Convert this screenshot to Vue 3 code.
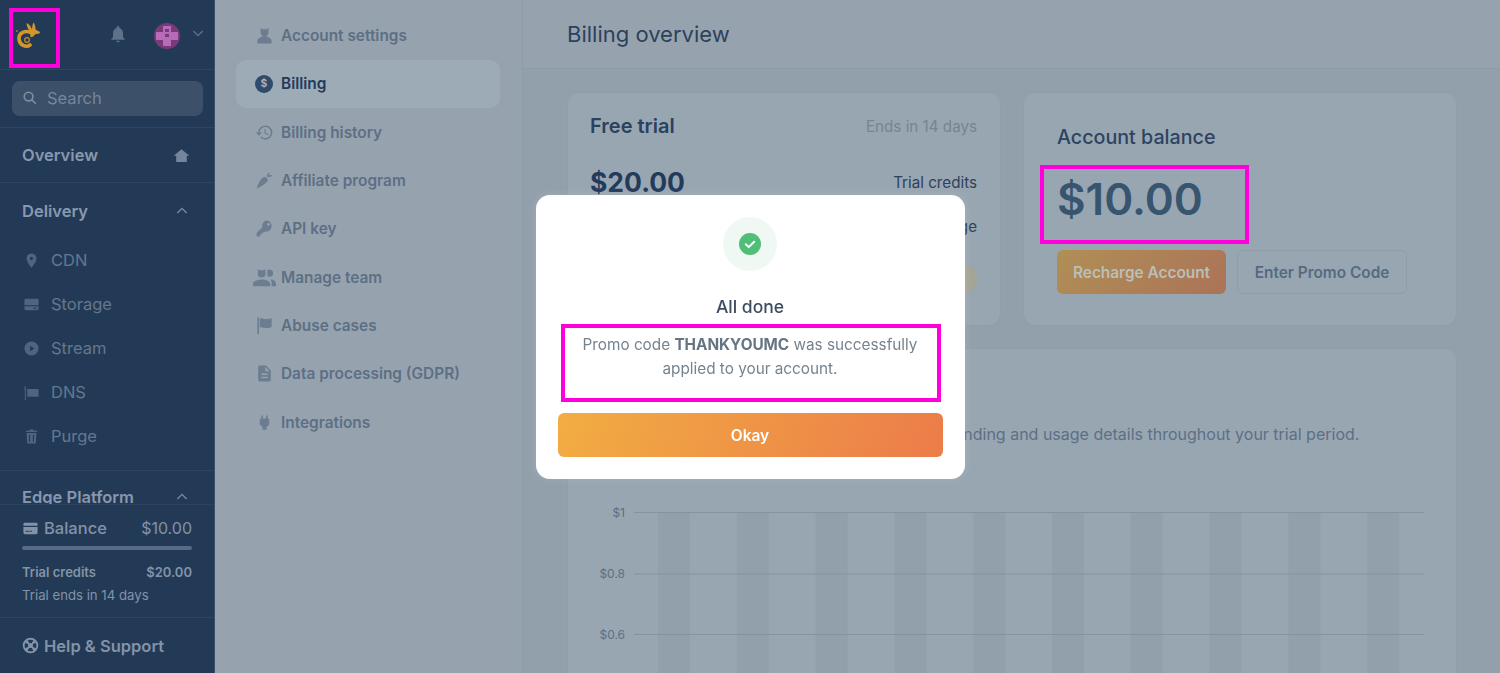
<template>
  <div class="app">
    <aside class="sidebar">
      <div class="side-top">
        <svg class="logo" viewBox="0 0 26 28">
          <path fill="none" stroke="#d2962d" stroke-width="3.600" stroke-linecap="round" d="M18 12.500C10 8 3.500 12 4 18c.5 6 7 9 11 6" />
          <path fill="#d2962d" d="M15 10.500c-2-2.500-3.500-5.500-3.500-8.500 2.500 1 4.500 3.500 5.500 6.500.1-2.500.5-5 1.500-7 1.500 2 2 4.500 2 7l4.500 2.500-.5 1.500-4.500.8c-1 2-2.500 3-4.500 3z" />
          <circle cx="12" cy="19" r="2.300" fill="none" stroke="#c9892b" stroke-width="1.300" />
          <circle cx="2" cy="10" r="1" fill="#c46a2a" />
        </svg>
        <svg class="bell" viewBox="0 0 24 24"><path :d="icons.bell" /></svg>
        <svg class="avatar" viewBox="0 0 26 26">
          <circle cx="13" cy="13" r="13" fill="#7a3a78" />
          <path fill="#b66cb8" d="M9 3h8v6h7v8h-7v6H9v-6H2V9h7z" />
          <path fill="#7a3a78" d="M11 6h4v3h-4zM11 11h4v3h-4z" />
        </svg>
        <svg class="chev down" viewBox="0 0 24 24"><path d="M5 9l7 7 7-7" /></svg>
      </div>

      <div class="side-search">
        <div class="search-box">
          <svg class="search-ico" viewBox="0 0 24 24"><circle cx="10.500" cy="10.500" r="7" /><path d="M16 16l6 6" /></svg>
          <span>Search</span>
        </div>
      </div>

      <div class="side-scroll">
        <div class="side-head overview">
          <span>Overview</span>
          <svg class="home" viewBox="0 0 24 24"><path :d="icons.home" /></svg>
        </div>
        <div class="side-head">
          <span>Delivery</span>
          <svg class="chev" viewBox="0 0 24 24"><path d="M5 15l7-7 7 7" /></svg>
        </div>
        <nav class="side-list">
          <a v-for="item in deliveryItems" :key="item.name" class="side-item">
            <svg viewBox="0 0 24 24"><path :d="item.icon" fill-rule="evenodd" /></svg>
            <span>{{ item.name }}</span>
          </a>
        </nav>
        <div class="side-head edge">
          <span>Edge Platform</span>
          <svg class="chev" viewBox="0 0 24 24"><path d="M5 15l7-7 7 7" /></svg>
        </div>
      </div>

      <div class="side-balance">
        <div class="bal-row">
          <svg class="bal-card" viewBox="0 0 24 24"><path :d="icons.card" fill-rule="evenodd" /></svg>
          <span class="bal-name">Balance</span>
          <span class="bal-value">$10.00</span>
        </div>
        <div class="bal-bar"></div>
        <div class="trial-row"><span>Trial credits</span><span>$20.00</span></div>
        <div class="trial-ends">Trial ends in 14 days</div>
      </div>

      <div class="side-help">
        <svg viewBox="0 0 24 24"><path :d="icons.help" fill-rule="evenodd" /></svg>
        <span>Help &amp; Support</span>
      </div>
    </aside>

    <nav class="subnav">
      <a v-for="item in accountItems" :key="item.name" class="sub-item" :class="{ active: item.active }">
        <span v-if="item.active" class="dollar">$</span>
        <svg v-else :class="{ wide: item.wide }" viewBox="0 0 24 24"><path :d="item.icon" fill-rule="evenodd" /></svg>
        <span>{{ item.name }}</span>
      </a>
    </nav>

    <main class="main">
      <header class="main-head">Billing overview</header>
      <div class="main-body">
        <section class="card trial">
          <div class="row">
            <h3>Free trial</h3>
            <span class="muted">Ends in 14 days</span>
          </div>
          <div class="row amount-row">
            <strong>$20.00</strong>
            <span>Trial credits</span>
          </div>
          <div class="row usage-row">
            <strong>$0.00</strong>
            <span>Trial usage</span>
          </div>
          <div class="row pill-row">
            <span class="pill">Active</span>
          </div>
        </section>

        <section class="card balance">
          <h3>Account balance</h3>
          <div class="balance-value">$10.00</div>
          <div class="balance-actions">
            <button class="btn-recharge">Recharge Account</button>
            <button class="btn-promo">Enter Promo Code</button>
          </div>
        </section>

        <section class="card usage">
          <h3>Trial usage</h3>
          <p>Use this overview to keep track of your latest spending and usage details throughout your trial period.</p>
          <svg class="chart" width="840" height="180">
            <rect v-for="x in barXs" :key="x" :x="x" y="12" width="32" height="168" fill="#92a0ac" />
            <g v-for="tick in ticks" :key="tick.label">
              <line x1="44" x2="834" :y1="tick.y" :y2="tick.y" stroke="#84939f" />
              <text x="35" :y="tick.y + 4" text-anchor="end">{{ tick.label }}</text>
            </g>
          </svg>
        </section>
      </div>
    </main>

    <div class="backdrop">
      <div class="modal">
        <div class="ok-ring">
          <svg viewBox="0 0 22 22">
            <circle cx="11" cy="11" r="11" fill="#4fbf78" />
            <path d="M6.800 11.300l2.900 2.800 5.500-5.400" fill="none" stroke="#fff" stroke-width="2" stroke-linecap="round" stroke-linejoin="round" />
          </svg>
        </div>
        <h2>All done</h2>
        <p>Promo code <b>THANKYOUMC</b> was successfully applied to your account.</p>
        <button class="btn-okay">Okay</button>
      </div>
    </div>

    <!-- annotation frames from the screenshot -->
    <div class="mark mark-logo"></div>
    <div class="mark mark-balance"></div>
    <div class="mark mark-promo"></div>
  </div>
</template>

<script setup>
const icons = {
  bell: 'M12 22c1.100 0 2-.9 2-2h-4c0 1.100.9 2 2 2zm6-6v-5c0-3.070-1.630-5.640-4.500-6.320V4c0-.83-.67-1.500-1.500-1.500s-1.500.67-1.500 1.500v.68C7.640 5.360 6 7.920 6 11v5l-2 2v1h16v-1l-2-2z',
  home: 'M12 3L1 12.500h3.500V21h15v-8.500H23z',
  card: 'M4 4h16a2 2 0 0 1 2 2v2H2V6a2 2 0 0 1 2-2z M2 10h20v8a2 2 0 0 1-2 2H4a2 2 0 0 1-2-2z M5 15h5v1.500H5z M11 15h3v1.500h-3z',
  help: 'M12 1a11 11 0 1 0 0 22 11 11 0 0 0 0-22z M8 4.500Q12 3 16 4.500L13.800 8.800Q12 8 10.200 8.800z M19.500 8Q21 12 19.500 16L15.200 13.800Q16 12 15.200 10.200z M16 19.500Q12 21 8 19.500L10.200 15.200Q12 16 13.800 15.200z M4.500 16Q3 12 4.500 8L8.800 10.200Q8 12 8.800 13.800z'
}

const deliveryItems = [
  { name: 'CDN', icon: 'M12 2C8.130 2 5 5.130 5 9c0 5.250 7 13 7 13s7-7.750 7-13c0-3.870-3.130-7-7-7z M12 6.800a2.200 2.200 0 1 0 0 4.400 2.200 2.200 0 0 0 0-4.400z' },
  { name: 'Storage', icon: 'M4 4h16a2 2 0 0 1 2 2v7H2V6a2 2 0 0 1 2-2z M2 14.500h20V18a2 2 0 0 1-2 2H4a2 2 0 0 1-2-2z M15 16.500h4V18h-4z' },
  { name: 'Stream', icon: 'M12 2a10 10 0 1 0 0 20 10 10 0 0 0 0-20z M10 8l6 4-6 4z' },
  { name: 'DNS', icon: 'M2.500 3h1.500v20H2.500z M6 7h16v11H6z M1 6h2v1.500H1z' },
  { name: 'Purge', icon: 'M9 2h6v2h5v1.500H4V4h5z M5 7h14l-1 15H6z M8.500 9.500v10h1.500v-10z M14 9.500v10h1.500v-10z' }
]

const accountItems = [
  { name: 'Account settings', icon: 'M7 2l2 2h6l2-2v6a5 5 0 0 1-10 0z M3 22v-3c0-3 4-6 9-6s9 3 9 6v3z' },
  { name: 'Billing', active: true },
  { name: 'Billing history', icon: 'M13 3a9 9 0 0 0-9 9H1l3.890 3.890.07.14L9 12H6c0-3.870 3.130-7 7-7s7 3.130 7 7-3.130 7-7 7c-1.930 0-3.680-.79-4.940-2.060l-1.420 1.420A8.954 8.954 0 0 0 13 21a9 9 0 0 0 0-18z M12 8v5l4.280 2.540.72-1.210-3.500-2.080V8z' },
  { name: 'Affiliate program', icon: 'M2 22c2-6 5-12 8.500-14 3-1.500 6 1 5.500 4.500C13.500 16 7 20 2 22z M15 7c0-2 1-4 3-5 .5 1.500 0 2.500-1 4 1.500-1 3-1 5-.5-1 1.500-2.500 2.500-5 2.500z' },
  { name: 'API key', icon: 'M15.500 2a6.500 6.500 0 0 0-6.200 8.400L2 17.700V22h4.300v-2.500h2.500V17h2.500l1.300-1.300A6.500 6.500 0 1 0 15.500 2z M17 4.900a1.800 1.800 0 1 0 0 3.600 1.800 1.800 0 0 0 0-3.600z' },
  { name: 'Manage team', wide: true, icon: 'M5 3l1.500 1.500h5L13 3v5a4 4 0 0 1-8 0z M15 4h2.500a3.500 3.500 0 0 1 0 7H15z M0 21v-2c0-3 4-5 9-5s9 2 9 5v2z M19.500 14c2.500.5 4.500 2 4.500 4.500V21h-4.500v-3c0-1.500-.5-3-1.500-4z' },
  { name: 'Abuse cases', icon: 'M3 2h2v21H3z M6 3c3-1 5 1 8 1 2 0 5-.5 7-1.500V14c-2 1-5 1.500-7 1.500-3 0-5-2-8-1z' },
  { name: 'Data processing (GDPR)', icon: 'M14 2H6c-1.100 0-2 .9-2 2v16c0 1.100.9 2 2 2h12c1.100 0 2-.9 2-2V8z M16 18H8v-2h8z M16 14H8v-2h8z M13 9V3.500L18.500 9z' },
  { name: 'Integrations', icon: 'M16.010 7L16 3h-2v4h-4V3H8v4h-.01C7 6.990 6 7.990 6 8.990v5.490L9.500 18v3h5v-3l3.500-3.510v-5.500c0-1-1-2-1.990-1.990z' }
]

const barXs = Array.from({ length: 10 }, (_, i) => 68 + i * 78.8)

const ticks = [
  { label: '$1', y: 12.5 },
  { label: '$0.8', y: 74 },
  { label: '$0.6', y: 134.5 }
]
</script>

<style>
html, body {
  margin: 0;
  height: 100%;
  overflow: hidden;
}
</style>

<style scoped>
.app {
  position: relative;
  display: flex;
  height: 673px;
  overflow: hidden;
  background: #92a0ac;
  font-family: Inter, "Liberation Sans", sans-serif;
}

h2, h3, p {
  margin: 0;
}

/* sidebar */
.sidebar {
  width: 215px;
  flex: none;
  display: flex;
  flex-direction: column;
  background: #233a56;
  border-right: 1px solid #3c5069;
  box-sizing: border-box;
  color: #8898ad;
}

.side-top {
  height: 70px;
  flex: none;
  display: flex;
  align-items: center;
  padding-left: 15px;
  box-sizing: border-box;
  border-bottom: 1px solid #2d4462;
}

.logo {
  width: 26px;
  height: 28px;
  margin-right: 67px;
}

.bell {
  width: 20px;
  height: 20px;
  fill: #5f718a;
  margin-right: 26px;
  margin-top: -2px;
}

.avatar {
  width: 26px;
  height: 26px;
  margin-right: 10px;
  margin-top: 2px;
}

.chev {
  width: 16px;
  height: 16px;
  fill: none;
  stroke: #7a8ba0;
  stroke-width: 2;
}

.chev.down {
  margin-top: -4px;
  stroke: #5f728a;
}

.side-search {
  height: 58px;
  flex: none;
  padding: 11px 12px 0 12px;
  box-sizing: border-box;
  border-bottom: 1px solid #2d4462;
}

.search-box {
  height: 35px;
  width: 191px;
  display: flex;
  align-items: center;
  gap: 10px;
  padding: 0 0 2px 10px;
  box-sizing: border-box;
  background: #3c5069;
  border-radius: 8px;
  color: #75879c;
  font-size: 16.500px;
}

.search-ico {
  width: 15px;
  height: 15px;
  fill: none;
  stroke: #7f90a5;
  stroke-width: 2.500;
}

.side-scroll {
  flex: 1;
  min-height: 0;
  overflow: hidden;
}

.side-head {
  display: flex;
  align-items: center;
  justify-content: space-between;
  padding: 0 24px 0 22px;
  height: 55px;
  font-size: 16.500px;
  font-weight: 600;
  color: #8898ad;
  box-sizing: border-box;
}

.side-head.overview {
  border-bottom: 1px solid #2d4462;
}

.home {
  width: 17px;
  height: 17px;
  fill: #74849a;
}

.side-list {
  padding-bottom: 12px;
  border-bottom: 1px solid #2d4462;
}

.side-item {
  height: 44px;
  display: flex;
  align-items: center;
  padding-left: 22.500px;
  gap: 11.500px;
  font-size: 16.500px;
  color: #64778f;
}

.side-item svg {
  width: 17px;
  height: 17px;
  fill: #4e6480;
}

.side-head.edge {
  height: 52px;
}

.side-balance {
  height: 114px;
  flex: none;
  padding: 13px 22px 0 22px;
  box-sizing: border-box;
  border-top: 1px solid #2b4260;
  border-bottom: 1px solid #2d4462;
}

.bal-row {
  display: flex;
  align-items: center;
  height: 20px;
  font-size: 16.500px;
  font-weight: 500;
  color: #8293a8;
}

.bal-card {
  width: 17px;
  height: 17px;
  fill: #8293a8;
  margin-right: 5px;
}

.bal-name {
  flex: 1;
}

.bal-value {
  font-size: 16px;
  font-weight: 400;
}

.bal-bar {
  height: 4px;
  margin-top: 8px;
  border-radius: 2px;
  background: #566b84;
}

.trial-row {
  display: flex;
  justify-content: space-between;
  margin-top: 14px;
  font-size: 13px;
  line-height: 16px;
  font-weight: 600;
  color: #8293a8;
}

.trial-ends {
  margin-top: 7px;
  font-size: 13.200px;
  line-height: 16px;
  color: #8293a8;
}

.side-help {
  height: 55px;
  flex: none;
  display: flex;
  align-items: center;
  gap: 5px;
  padding-left: 22px;
  font-size: 16.500px;
  font-weight: 600;
  color: #8293a8;
}

.side-help svg {
  width: 17px;
  height: 17px;
  fill: #8293a8;
}

/* account sub navigation */
.subnav {
  width: 308px;
  flex: none;
  padding: 11.500px 22px 0 21px;
  box-sizing: border-box;
  background: #96a3af;
  border-right: 1px solid #8d9ba7;
}

.sub-item {
  height: 48.300px;
  display: flex;
  align-items: center;
  gap: 7.500px;
  padding-left: 18.500px;
  box-sizing: border-box;
  border-radius: 10px;
  font-size: 15.400px;
  font-weight: 600;
  color: #5d6f85;
}

.sub-item svg {
  width: 19px;
  height: 19px;
  fill: #6c7d91;
}

.sub-item svg.wide {
  width: 23px;
  height: 23px;
  margin: 0 -2px;
}

.sub-item.active {
  background: #9dabb7;
  color: #233a5a;
}

.dollar {
  width: 18px;
  height: 18px;
  margin: 0 0.500px;
  border-radius: 50%;
  background: #2f4a6b;
  color: #a9b6c2;
  font-size: 10.500px;
  line-height: 18px;
  text-align: center;
}

/* main column */
.main {
  flex: 1;
  min-width: 0;
  background: #92a0ac;
}

.main-head {
  height: 69px;
  padding-left: 44px;
  line-height: 68px;
  font-size: 22px;
  color: #2d415a;
  box-sizing: border-box;
  border-bottom: 1px solid #8d9ba7;
  background: #96a3af;
}

.main-body {
  display: grid;
  grid-template-columns: 434px 434px;
  grid-auto-rows: min-content;
  gap: 22px;
  padding: 23px 43px 0 44px;
}

.card {
  box-sizing: border-box;
  background: #98a6b2;
  border: 1px solid #909eaa;
  border-radius: 12px;
}

.trial,
.balance {
  height: 234px;
}

.trial {
  padding: 20px 23px 0 22px;
  color: #233a5a;
}

.row {
  display: flex;
  align-items: center;
  justify-content: space-between;
}

.trial h3 {
  font-size: 20px;
  line-height: 26px;
  font-weight: 600;
  color: #2a4160;
}

.muted {
  font-size: 15.200px;
  color: #76858f;
}

.amount-row {
  margin-top: 24px;
  height: 38px;
  font-size: 15.200px;
  color: #2d415a;
}

.amount-row strong {
  font-size: 26.500px;
  font-weight: 700;
  color: #233a5a;
}

.usage-row {
  margin-top: 6px;
  height: 38px;
  font-size: 15.200px;
  color: #2d415a;
}

.pill-row {
  justify-content: flex-end;
  margin-top: 19px;
}

.pill {
  height: 30px;
  padding: 0 14px;
  border-radius: 15px;
  background: #a5a596;
  font-size: 13px;
  line-height: 30px;
}

.balance {
  padding: 31px 33px 0 33px;
}

.balance h3 {
  font-size: 19.700px;
  line-height: 26px;
  font-weight: 500;
  color: #2d4360;
}

.balance-value {
  margin-top: 19px;
  font-size: 44px;
  line-height: 60px;
  font-weight: 600;
  color: #37556f;
}

.balance-actions {
  display: flex;
  gap: 11px;
  margin-top: 21px;
}

.balance-actions button {
  height: 44px;
  padding: 0;
  border-radius: 6px;
  font-family: inherit;
  font-size: 15.400px;
  font-weight: 600;
  box-sizing: border-box;
}

.btn-recharge {
  width: 169px;
  border: none;
  color: #b9bfb9;
  background: linear-gradient(135deg, #b08f55, #ab7358);
}

.btn-promo {
  width: 170px;
  border: 1px solid #8f9daa;
  background: transparent;
  color: #566a80;
}

.usage {
  grid-column: 1 / 3;
  height: 420px;
  padding: 24px 22px 0 22px;
}

.usage h3 {
  font-size: 18px;
  line-height: 26px;
  font-weight: 600;
  color: #2d4360;
}

.usage p {
  margin-top: 23px;
  font-size: 16px;
  line-height: 24px;
  color: #5d6f85;
  white-space: nowrap;
}

.chart {
  display: block;
  margin-top: 54px;
}

.chart text {
  font-size: 12px;
  fill: #5d6f85;
}

/* modal */
.backdrop {
  position: absolute;
  inset: 0;
  display: flex;
  align-items: center;
  justify-content: center;
  backdrop-filter: blur(0.6px);
}

.modal {
  width: 429px;
  height: 284px;
  padding: 22px;
  box-sizing: border-box;
  display: flex;
  flex-direction: column;
  align-items: center;
  background: #fff;
  border-radius: 14px;
  box-shadow: 0 0 8px rgba(255, 255, 255, 0.15);
}

.ok-ring {
  width: 54px;
  height: 54px;
  flex: none;
  display: flex;
  align-items: center;
  justify-content: center;
  border-radius: 50%;
  background: #f0f8f3;
}

.ok-ring svg {
  width: 22px;
  height: 22px;
}

.modal h2 {
  margin-top: 24.500px;
  font-size: 17.500px;
  line-height: 24px;
  font-weight: 500;
  color: #3d4c5f;
}

.modal p {
  width: 345px;
  height: 48px;
  margin-top: 13.500px;
  text-align: center;
  font-size: 15.300px;
  line-height: 24px;
  color: #75838f;
}

.modal p b {
  font-weight: 700;
  color: #667584;
}

.btn-okay {
  width: 385px;
  height: 44px;
  margin-top: 32px;
  padding: 2px 0 0 0;
  border: none;
  border-radius: 6px;
  background: linear-gradient(110deg, #f2ad42, #ec7c4a);
  color: #fff;
  font-family: inherit;
  font-size: 15.500px;
  font-weight: 600;
}

/* annotation frames */
.mark {
  position: absolute;
  box-sizing: border-box;
  border: 4px solid #ff00dc;
}

.mark-logo {
  left: 9px;
  top: 8px;
  width: 51px;
  height: 60px;
}

.mark-balance {
  left: 1040px;
  top: 165px;
  width: 209px;
  height: 79px;
}

.mark-promo {
  left: 561px;
  top: 324px;
  width: 380px;
  height: 78px;
}
</style>
